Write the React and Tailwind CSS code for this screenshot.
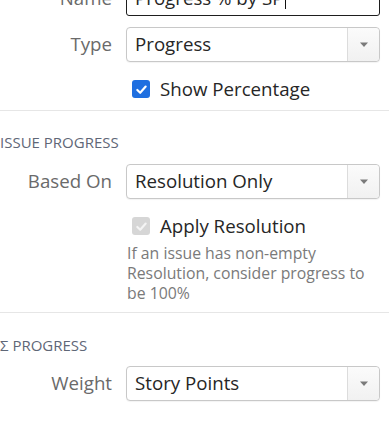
import React from "react";

function Arrow() {
  return (
    <div className="flex w-[32px] self-stretch items-center justify-center border-l border-[#dcdcdc] bg-gradient-to-b from-[#fbfbfb] to-[#f1f1f1] rounded-r-[4px]">
      <svg width="10" height="6" viewBox="0 0 10 6">
        <path d="M1 0.5 H9 L5 5 Z" fill="#7a7a7a" />
      </svg>
    </div>
  );
}

function Select({ value }) {
  return (
    <div className="flex h-[35px] w-[254px] items-center rounded-[4px] border border-[#c8c8c8] bg-white shadow-[0_1px_1px_rgba(0,0,0,0.05)]">
      <div className="flex-1 pl-[8px] text-[18.7px] text-[#262626]">{value}</div>
      <Arrow />
    </div>
  );
}

function Row({ label, children }) {
  return (
    <div className="flex items-center">
      <div className="w-[112px] text-right text-[18.7px] text-[#6a6a6a]">{label}</div>
      <div className="ml-[14px]">{children}</div>
    </div>
  );
}

function Check({ disabled, label }) {
  return (
    <div className="flex h-[18px] items-center pl-[132px]">
      <div
        className={
          "flex h-[18px] w-[18px] items-center justify-center rounded-[3px] " +
          (disabled ? "bg-[#d6d6d6]" : "bg-[#1f6fe0]")
        }
      >
        <svg width="13" height="13" viewBox="0 0 14 14">
          <path
            d="M2.5 7.5 L5.6 10.5 L11.5 3.8"
            fill="none"
            stroke={disabled ? "#f4f4f4" : "#ffffff"}
            strokeWidth="2.3"
            strokeLinecap="round"
            strokeLinejoin="round"
          />
        </svg>
      </div>
      <span className="ml-[10px] text-[18.7px] leading-[18px] text-[#262626]">{label}</span>
    </div>
  );
}

export default function App() {
  return (
    <div
      className="h-[425px] w-[389px] overflow-hidden bg-white"
      style={{ fontFamily: '"Open Sans", "Noto Sans", sans-serif' }}
    >
      <div className="-mt-[19px]">
        <Row label="Name">
          <div className="flex h-[35px] w-[254px] items-center rounded-[3px] border-[1.5px] border-[#1e1e1e] bg-white pl-[8px] text-[18.7px] text-[#262626]">
            Progress % by SP
            <span className="ml-[1px] inline-block h-[20px] w-[1px] bg-[#111]" />
          </div>
        </Row>
        <div className="mt-[11px]">
          <Row label="Type">
            <Select value="Progress" />
          </Row>
        </div>
        <div className="mt-[18px]">
          <Check label="Show Percentage" />
        </div>
        <div className="mt-[12px] h-px bg-[#e6e6e6]" />
        <div className="mt-[20px] h-[22px] text-[15px] leading-[22px] text-[#5f6777]">ISSUE PROGRESS</div>
        <div className="mt-[11px]">
          <Row label="Based On">
            <Select value="Resolution Only" />
          </Row>
        </div>
        <div className="mt-[18px]">
          <Check disabled label="Apply Resolution" />
        </div>
        <div className="mt-[8px] pl-[127px] pr-[8px] text-[15.8px] leading-[20px] text-[#7a7a7a]">
          If an issue has non-empty
          <br />
          Resolution, consider progress to
          <br />
          be 100%
        </div>
        <div className="mt-[9px] h-px bg-[#e6e6e6]" />
        <div className="mt-[21px] h-[22px] text-[15px] leading-[22px] text-[#5f6777]">Σ PROGRESS</div>
        <div className="mt-[10px]">
          <Row label="Weight">
            <Select value="Story Points" />
          </Row>
        </div>
      </div>
    </div>
  );
}
